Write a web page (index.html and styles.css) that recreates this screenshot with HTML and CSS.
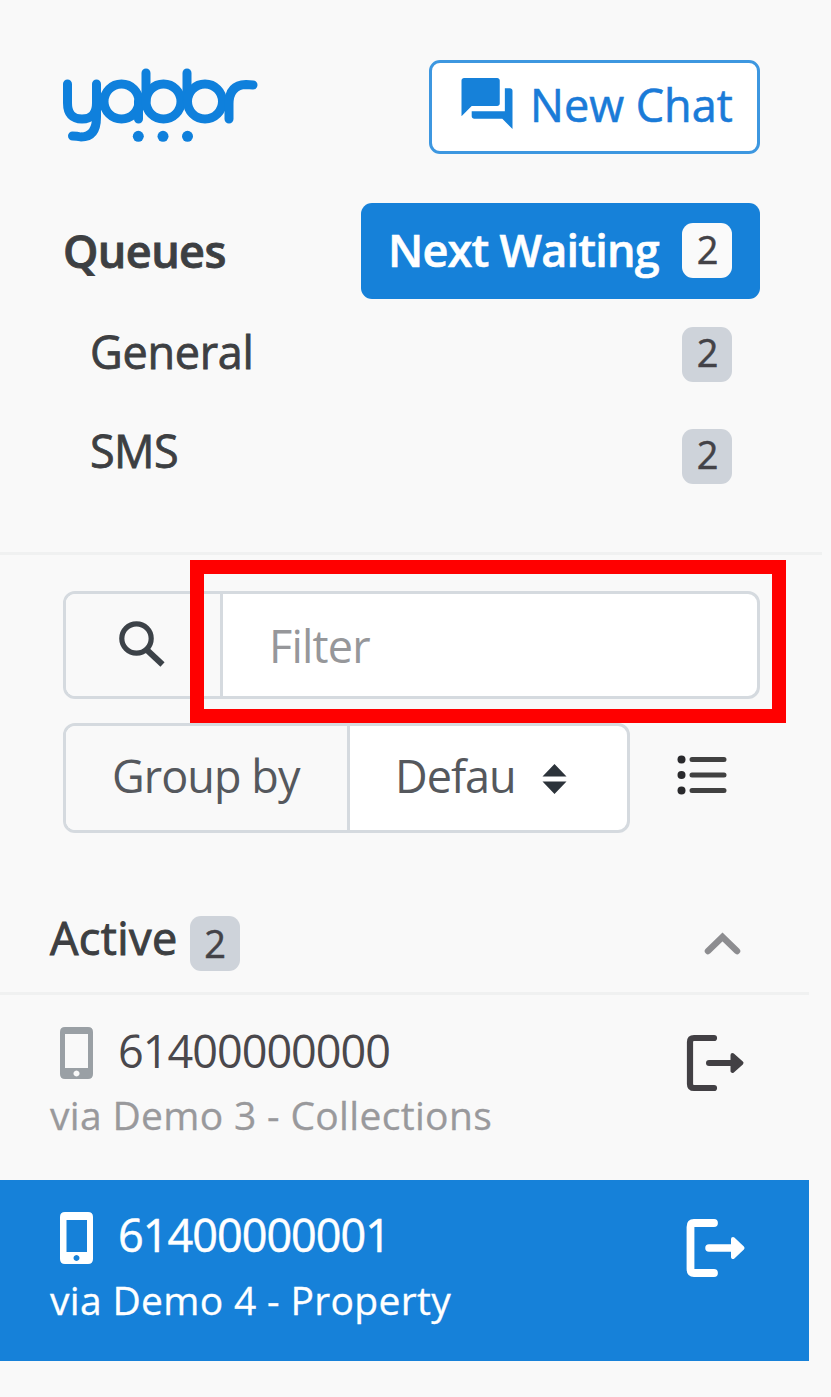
FILE: index.html
```html
<!DOCTYPE html>
<html lang="en">
<head>
<meta charset="utf-8">
<title>yabbr</title>
<link rel="stylesheet" href="styles.css">
</head>
<body>
<aside class="sidebar">
  <header class="top">
    <svg class="logo" viewBox="60 66 200 80" role="img" aria-label="yabbr">
      <g fill="none" stroke="#0f80dc" stroke-width="9" stroke-linecap="round" stroke-linejoin="round">
        <path d="M67.500 84V103Q67.500 119 82 119Q96.500 119 96.500 103V84V117Q96.500 137 81 137Q77 136 72.500 136"/>
        <circle cx="121.500" cy="101.500" r="17.500"/>
        <path d="M138.500 101.500V119M146 73V101"/>
        <circle cx="163.500" cy="101.500" r="17.500"/>
        <path d="M187 73V101"/>
        <circle cx="205" cy="101.500" r="17.500"/>
        <path d="M229 119V104Q229 85 246 84.500L253 85"/>
      </g>
      <g fill="#0f80dc"><circle cx="138.300" cy="136.300" r="5.500"/><circle cx="163" cy="136.300" r="5.500"/><circle cx="187.500" cy="136.300" r="5.500"/></g>
    </svg>
    <button class="new-chat">
      <svg class="chat-icon" viewBox="2 2 20 20"><path fill="#1681d9" d="M21 6h-2v9H6v2c0 .55.45 1 1 1h11l4 4V7c0-.55-.45-1-1-1zm-4 6V3c0-.55-.45-1-1-1H3c-.55 0-1 .45-1 1v14l4-4h10c.55 0 1-.45 1-1z"/></svg>
      <span class="new-chat-label">New Chat</span>
    </button>
  </header>

  <section class="queues">
    <div class="queues-head">
      <h2 class="queues-title">Queues</h2>
      <button class="next"><span class="next-label">Next Waiting</span><span class="badge badge-light">2</span></button>
    </div>
    <div class="queue"><span class="general">General</span><span class="badge">2</span></div>
    <div class="queue"><span class="sms">SMS</span><span class="badge">2</span></div>
  </section>

  <section class="filters">
    <div class="group search">
      <div class="search-addon">
        <svg class="search-icon" viewBox="118 621 48 46" fill="none" stroke="#3c4248"><circle cx="136.500" cy="638.500" r="14.700" stroke-width="5.200"/><path d="M147.500 650.500L162.500 664.500" stroke-width="6"/></svg>
      </div>
      <div class="search-field"><span class="filter-label">Filter</span></div>
      <div class="highlight"></div>
    </div>
    <div class="group-row">
      <div class="group group-by">
        <div class="group-addon"><span class="group-label">Group by</span></div>
        <div class="select"><span class="select-label">Defau</span>
          <svg class="caret" viewBox="0 0 24 32" fill="#2c333a"><path d="M12 1L24 13.500H0zM12 31L0 18.500H24z"/></svg>
        </div>
      </div>
      <svg class="list-icon" viewBox="676 754 52 42"><g fill="#29292c"><circle cx="681.500" cy="759.500" r="4"/><circle cx="681.500" cy="775" r="4"/><circle cx="681.500" cy="790.500" r="4"/></g><path d="M692 759.500H724M692 775H724M692 790.500H724" stroke="#414141" stroke-width="5" stroke-linecap="round"/></svg>
    </div>
  </section>

  <section class="active">
    <div class="active-head">
      <h2 class="active-title">Active</h2><span class="badge badge-active">2</span>
      <svg class="chevron" viewBox="704 932 38 24"><path d="M708 951L722.500 937L737 951" fill="none" stroke="#8d8d90" stroke-width="6.500" stroke-linecap="round"/></svg>
    </div>
    <div class="chat">
      <div class="chat-main">
        <svg class="phone" viewBox="0 0 34 52"><path fill="#9aa0a5" fill-rule="evenodd" d="M5 0H28Q33 0 33 5V47Q33 52 28 52H5Q0 52 0 47V5Q0 0 5 0zM5 7V41H28V7zM16.500 43.500a3 3 0 1 0 .01 0z"/></svg>
        <span class="number">61400000000</span>
        <svg class="leave" viewBox="686 1034 60 58"><path d="M714 1038H694Q690 1038 690 1042V1084Q690 1088 694 1088H714" fill="none" stroke="#424044" stroke-width="6.200" stroke-linecap="round"/><path d="M709 1063H732" stroke="#424044" stroke-width="6" stroke-linecap="round"/><path d="M732.500 1055L741.500 1063L732.500 1071z" fill="#424044" stroke="#424044" stroke-width="4" stroke-linejoin="round"/></svg>
      </div>
      <div class="via">via Demo 3 - Collections</div>
    </div>
    <div class="chat selected">
      <div class="chat-main">
        <svg class="phone" viewBox="0 0 34 52"><path fill="#fff" fill-rule="evenodd" d="M5 0H28Q33 0 33 5V47Q33 52 28 52H5Q0 52 0 47V5Q0 0 5 0zM6.500 8V40H27V8zM16.500 43a3 3 0 1 0 .01 0z"/></svg>
        <span class="number">61400000001</span>
        <svg class="leave" viewBox="686 1034 60 58"><path d="M714 1038H694Q690.500 1038 690.500 1042V1084Q690.500 1088 694 1088H714" fill="none" stroke="#fff" stroke-width="7.800" stroke-linecap="round"/><path d="M709 1063H732" stroke="#fff" stroke-width="7.500" stroke-linecap="round"/><path d="M733 1054L742.500 1063L733 1072z" fill="#fff" stroke="#fff" stroke-width="4" stroke-linejoin="round"/></svg>
      </div>
      <div class="via">via Demo 4 - Property</div>
    </div>
  </section>
</aside>
</body>
</html>
```
FILE: styles.css
```css
* { box-sizing: border-box; }
body { margin: 0; background: #f9f9f9; font-family: "Open Sans", "Noto Sans", sans-serif; font-size: 45px; line-height: 60px; color: #3d3f42; white-space: nowrap; }
svg { display: block; flex: none; }
h2 { margin: 0; font-size: inherit; line-height: inherit; }
button { font: inherit; margin: 0; }
.sidebar { height: 1397px; overflow: hidden; }

.top { display: flex; justify-content: space-between; align-items: flex-start; padding: 60px 71px 0 60px; height: 203px; }
.logo { width: 200px; height: 80px; margin-top: 6px; }
.new-chat { display: flex; width: 331px; height: 94px; padding: 15px 0 0 28px; border: 3px solid #3d97e0; border-radius: 11px; background: #fff; color: #1a7bd8; }
.chat-icon { width: 54px; height: 51px; }
.new-chat-label { margin: -3px 0 0 16px; -webkit-text-stroke: 0.6px currentColor; }

.queues { height: 349px; }
.queues-head { display: flex; justify-content: space-between; padding: 0 71px 0 63px; height: 97px; }
.queues-title { font-weight: 600; padding-top: 18px; letter-spacing: -0.6px; -webkit-text-stroke: 0.8px currentColor; }
.next { display: flex; justify-content: space-between; width: 399px; height: 96px; padding: 15px 28px 0 27px; border: 0; border-radius: 11px; background: #1681d9; color: #fff; }
.next-label { font-weight: 600; padding-top: 2px; letter-spacing: -0.8px; -webkit-text-stroke: 0.6px currentColor; }
.badge { flex: none; width: 50px; height: 55px; border-radius: 11px; background: #ced3da; color: #434247; font-size: 38px; line-height: 50px; font-weight: 400; text-align: center; text-indent: 1px; -webkit-text-stroke: 0.5px currentColor; }
.badge-light { margin-top: 5px; background: #fafafa; line-height: 53px; }
.queue { display: flex; justify-content: space-between; align-items: flex-start; height: 102px; padding: 20px 99px 0 90px; }
.queue .badge { margin-top: 7px; }
.general { margin-top: 2px; letter-spacing: -0.3px; -webkit-text-stroke: 0.8px currentColor; }
.sms { margin-top: -1px; letter-spacing: -0.6px; -webkit-text-stroke: 0.8px currentColor; }

.filters { width: 822px; height: 334px; border-top: 3px solid #f0f1f1; padding: 36px 62px 0 63px; }
.group { display: flex; border: 3px solid #d5dadf; border-radius: 12px; background: #fff; }
.search { position: relative; height: 108px; width: 697px; }
.search-addon { width: 157px; border-right: 3px solid #d5dadf; background: #f9f9f9; border-radius: 9px 0 0 9px; padding: 27px 0 0 52px; }
.search-icon { width: 48px; height: 46px; }
.search-field { padding: 22px 0 0 46px; color: #96979a; letter-spacing: -0.8px; }
.highlight { position: absolute; left: 124px; top: -34px; width: 596px; height: 163px; border: 14px solid #f00; z-index: 1; }
.group-row { display: flex; margin-top: 24px; }
.group-by { width: 567px; height: 110px; }
.group-addon { width: 284px; border-right: 3px solid #d5dadf; background: #f9f9f9; border-radius: 9px 0 0 9px; padding: 20px 0 0 46px; color: #55585d; letter-spacing: -0.95px; }
.select { display: flex; padding: 20px 0 0 45px; color: #55585d; letter-spacing: -1px; }
.caret { width: 25px; height: 32px; margin: 17px 0 0 26px; }
.list-icon { width: 52px; height: 42px; margin: 31px 0 0 46px; }

.active { width: 809px; }
.active-head { display: flex; height: 109px; padding: 20px 67px 0 50px; border-bottom: 3px solid #f0f1f1; }
.active-title { font-weight: 400; margin-top: 2px; letter-spacing: 0.4px; -webkit-text-stroke: 1px currentColor; }
.badge-active { margin: 10px 0 0 12px; line-height: 54px; }
.chevron { width: 38px; height: 24px; margin: 26px 0 0 auto; }
.chat { height: 185px; padding: 25px 63px 0 50px; color: #4a484c; }
.chat-main { display: flex; height: 66px; }
.phone { width: 34px; height: 52px; margin: 7px 0 0 10px; }
.number { margin: 1px 0 0 24px; letter-spacing: -1px; }
.leave { width: 60px; height: 58px; margin: 14px 0 0 auto; }
.via { font-size: 39px; line-height: 58px; color: #99999c; letter-spacing: 0.33px; -webkit-text-stroke: 0.3px currentColor; }
.selected { height: 181px; background: #1681d9; color: #fff; }
.selected .number { margin-top: 0; -webkit-text-stroke: 0.5px currentColor; }
.selected .via { color: #fff; }
```
